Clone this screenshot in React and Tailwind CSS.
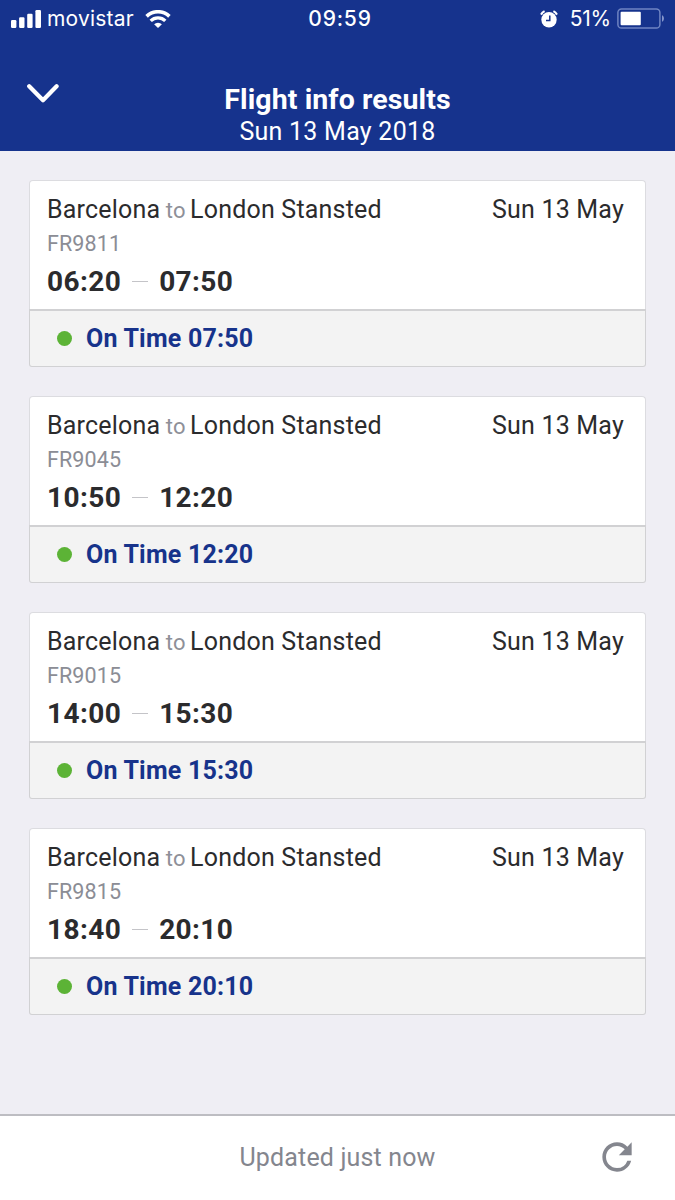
import React from 'react';

const flights = [
  { number: 'FR9811', departs: '06:20', arrives: '07:50' },
  { number: 'FR9045', departs: '10:50', arrives: '12:20' },
  { number: 'FR9015', departs: '14:00', arrives: '15:30' },
  { number: 'FR9815', departs: '18:40', arrives: '20:10' },
];

function SignalIcon() {
  return (
    <svg className="w-[30px] h-[18px]" viewBox="0 0 30 18" fill="currentColor">
      <rect x="0" y="10" width="5.4" height="8" rx="1.2" />
      <rect x="8.1" y="7.3" width="5.4" height="10.7" rx="1.2" />
      <rect x="16.2" y="3.8" width="5.4" height="14.2" rx="1.2" />
      <rect x="24.4" y="0" width="5.6" height="18" rx="1.2" />
    </svg>
  );
}

function WifiIcon() {
  return (
    <svg className="w-[26px] h-[18px]" viewBox="0 0 26 18" fill="none" stroke="currentColor">
      <path d="M1.6 6.6a16.2 16.2 0 0 1 22.8 0" strokeWidth="3.6" transform="translate(0 -0.2)" />
      <path d="M5.7 10.9a10.4 10.4 0 0 1 14.6 0" strokeWidth="3.3" />
      <path d="M13 18l-3.9-3.7a5.6 5.6 0 0 1 7.8 0z" fill="currentColor" stroke="none" />
    </svg>
  );
}

function AlarmIcon() {
  return (
    <svg className="w-[18px] h-[18px]" viewBox="0 0 18 18">
      <circle cx="9" cy="9.8" r="7.7" fill="#fff" />
      <path d="M1 4.6A9.6 9.6 0 0 1 4.6 1.2M13.4 1.2A9.6 9.6 0 0 1 17 4.6" fill="none" stroke="#fff" strokeWidth="2" />
      <path d="M9.8 5.4v5.2H6" fill="none" stroke="#16338d" strokeWidth="1.5" />
    </svg>
  );
}

function BatteryIcon() {
  return (
    <svg className="w-[48px] h-[21px]" viewBox="0 0 48 21">
      <rect x="0.9" y="0.9" width="42" height="19.2" rx="3.6" fill="none" stroke="#6f84c2" strokeWidth="1.5" />
      <rect x="3.6" y="3.8" width="20.2" height="13.4" rx="1" fill="#fff" />
      <path d="M45 7.2c2.6.8 2.6 5.8 0 6.6z" fill="#8596cc" />
    </svg>
  );
}

function StatusBar() {
  return (
    <div className="grid grid-cols-[1fr_auto_1fr] items-center h-[37px] pl-[11px] pr-[10px] font-['Inter',sans-serif] text-[21px]">
      <div className="flex items-center">
        <SignalIcon />
        <span className="ml-[6px] tracking-[0.2px] pt-px">movistar</span>
        <span className="ml-[11px]">
          <WifiIcon />
        </span>
      </div>
      <div className="font-medium tracking-[0.8px] pl-1 pt-px">09:59</div>
      <div className="flex items-center justify-end">
        <AlarmIcon />
        <span className="ml-3 mr-[6px] tracking-[-0.2px] pt-px">51%</span>
        <BatteryIcon />
      </div>
    </div>
  );
}

function Header() {
  return (
    <header className="h-[151px] bg-[#16338d] text-white">
      <StatusBar />
      <div className="grid grid-cols-[60px_1fr_60px] pt-[46px]">
        <svg className="w-8 h-5 ml-[27px] mt-px" viewBox="0 0 32 20" fill="none">
          <path d="M2.2 2.3L16 16.2L29.6 2.3" stroke="#fff" strokeWidth="4.2" strokeLinecap="round" strokeLinejoin="round" />
        </svg>
        <div className="text-center">
          <h1 className="text-[28.5px] leading-[33px] font-bold tracking-[0.1px]">Flight info results</h1>
          <p className="text-[25px] leading-[31px] tracking-[0.25px]">Sun 13 May 2018</p>
        </div>
      </div>
    </header>
  );
}

function FlightCard({ flight }) {
  return (
    <div className="h-[187px] flex flex-col">
      <div className="h-[129px] pt-[14px] pl-[17px] pr-[21px] bg-white rounded-t-[4px] border border-b-0 border-[#dcdce0]">
        <div className="flex justify-between text-[25px] leading-[30px] tracking-[0.2px] text-[#2b2b2d]">
          <div>
            Barcelona <span className="text-[22px] text-[#8e9098] ml-[-1px] mr-[-2px]">to</span> London Stansted
          </div>
          <div>Sun 13 May</div>
        </div>
        <div className="mt-[5px] text-[21.5px] leading-[26px] tracking-[0.1px] text-[#8b8d95]">{flight.number}</div>
        <div className="mt-[8px] flex items-center text-[28px] leading-[34px] font-bold tracking-[0.4px] text-[#2b2b2d]">
          <span>{flight.departs}</span>
          <span className="w-4 h-px ml-[11px] mr-[11px] mb-px bg-[#c4c4c8]" />
          <span>{flight.arrives}</span>
        </div>
      </div>
      <div className="flex-1 flex items-center pl-[27px] rounded-b-[3px] border border-t-2 border-[#d1d1d3] bg-[#f3f3f3]">
        <span className="w-[15px] h-[15px] rounded-full bg-[#5cb336]" />
        <span className="ml-[14px] text-[25px] leading-[30px] font-bold tracking-[0.2px] text-[#17338b]">
          On Time {flight.arrives}
        </span>
      </div>
    </div>
  );
}

export default function App() {
  return (
    <div className="w-[675px] h-[1200px] flex flex-col bg-[#efeef4] font-['Roboto',sans-serif]">
      <Header />
      <main className="flex-1 px-[29px] pt-[29px] flex flex-col gap-[29px]">
        {flights.map((flight) => (
          <FlightCard key={flight.number} flight={flight} />
        ))}
      </main>
      <footer className="h-[86px] border-t-2 border-[#bdbdc2] bg-white grid grid-cols-[80px_1fr_80px] items-center">
        <div />
        <div className="text-center text-[25px] leading-[30px] tracking-[0.15px] text-[#84868e]">Updated just now</div>
        <svg className="w-[44px] h-[44px] mb-[2px]" viewBox="0 0 24 24" fill="#84868e">
          <path d="M17.65 6.35A7.958 7.958 0 0 0 12 4c-4.42 0-7.99 3.58-7.99 8s3.57 8 7.99 8c3.73 0 6.84-2.55 7.73-6h-2.08A5.99 5.99 0 0 1 12 18c-3.31 0-6-2.69-6-6s2.69-6 6-6c1.66 0 3.14.69 4.22 1.78L13 11h7V4l-2.35 2.35z" />
        </svg>
      </footer>
    </div>
  );
}
